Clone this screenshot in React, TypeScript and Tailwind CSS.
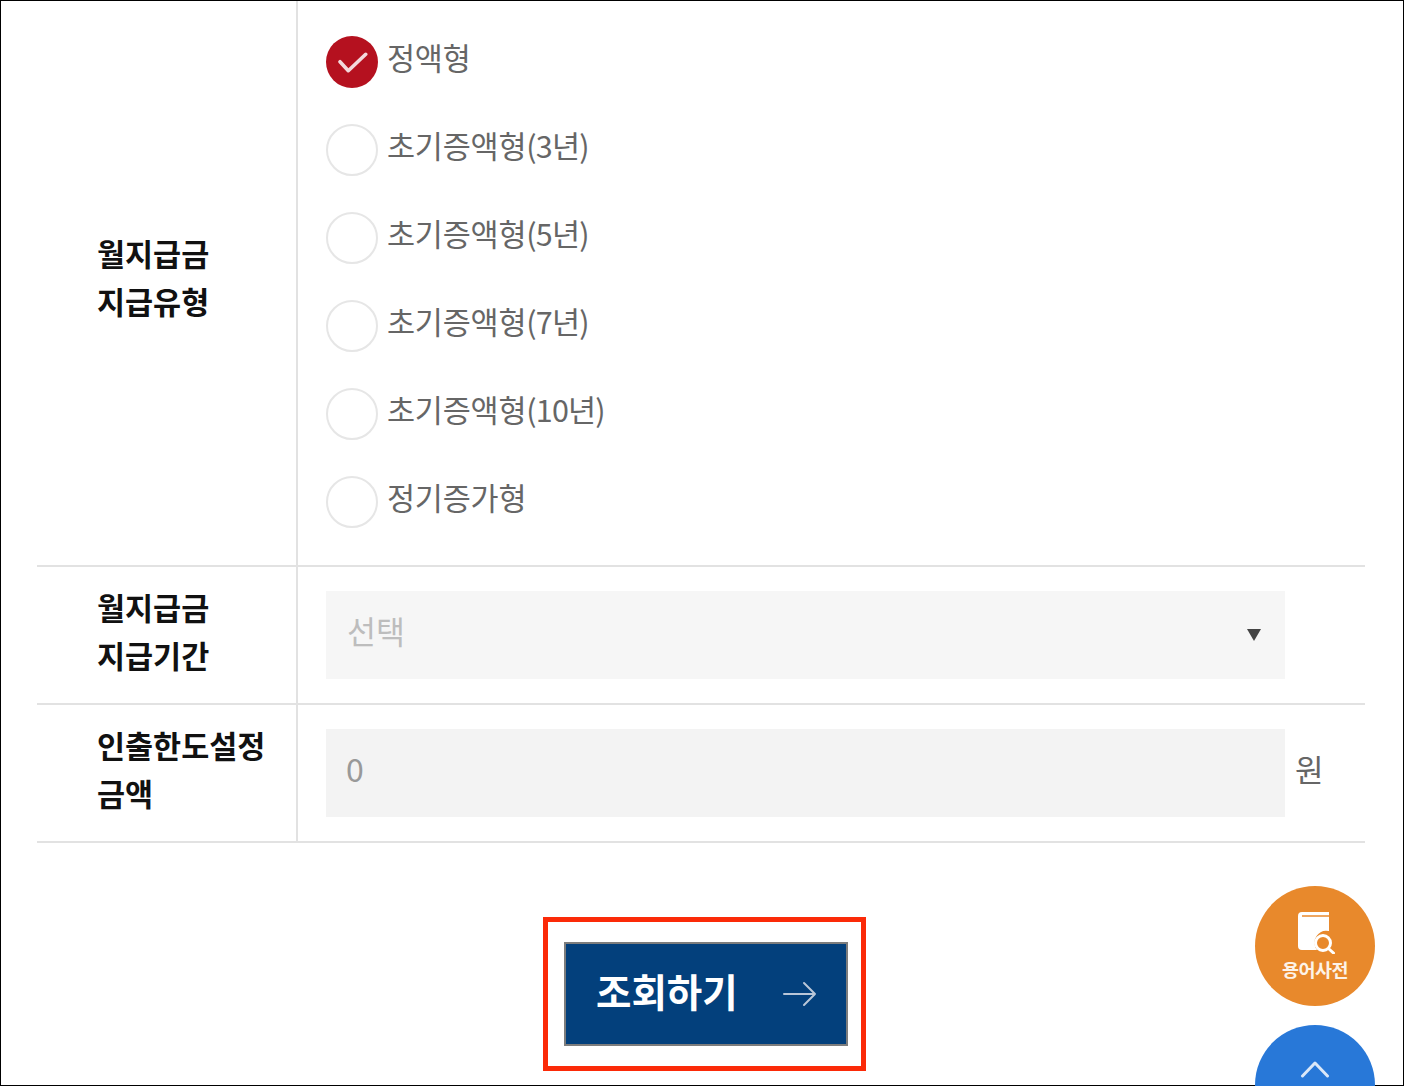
const FONT = "font-['Noto_Sans_CJK_KR','Noto_Sans',sans-serif]";

const options = [
  ["정액형", ""],
  ["초기증액형", "(3년)"],
  ["초기증액형", "(5년)"],
  ["초기증액형", "(7년)"],
  ["초기증액형", "(10년)"],
  ["정기증가형", ""],
];

function Radio({ label, suffix, checked }: { label: string; suffix: string; checked?: boolean }) {
  return (
    <div className="flex h-[88px] items-center">
      {checked ? (
        <span className="flex h-[52px] w-[52px] items-center justify-center rounded-full bg-[#b5111f]">
          <svg width="32" height="24" viewBox="0 0 32 24" fill="none" stroke="#f3d9dc" strokeWidth="3.6" strokeLinecap="round" strokeLinejoin="round">
            <path d="M4 11.7l8.3 9L29.7 4.3" />
          </svg>
        </span>
      ) : (
        <span className="h-[52px] w-[52px] rounded-full border-2 border-[#e6e6e6] bg-white" />
      )}
      <span className="relative top-[-5px] ml-[9px] text-[30.5px] leading-[40px] tracking-[-0.2px] text-[#666666]">
        {label}
        <span className="tracking-[-0.8px]">{suffix}</span>
      </span>
    </div>
  );
}

function Th({ lines, pad }: { lines: string[]; pad: string }) {
  return (
    <div className={`flex w-[261px] shrink-0 flex-col justify-center border-r-2 border-[#e2e2e2] pl-[60px] text-[30.5px] font-bold leading-[48px] text-[#111111] ${pad}`}>
      {lines.map((l) => (
        <div key={l}>{l}</div>
      ))}
    </div>
  );
}

export default function App() {
  return (
    <div className={`${FONT} relative h-[1086px] w-[1404px] overflow-hidden bg-white`}>
      <div className="h-[1086px] w-[1404px] overflow-hidden border border-black">
        <div className="mx-[36px] w-[1328px]">
          <div className="flex h-[566px] border-b-2 border-[#e2e2e2]">
            <Th lines={["월지급금", "지급유형"]} pad="pb-[13px]" />
            <div className="pl-[28px] pt-[17px]">
              {options.map(([label, suffix], i) => (
                <Radio key={label + suffix} label={label} suffix={suffix} checked={i === 0} />
              ))}
            </div>
          </div>
          <div className="flex h-[138px] border-b-2 border-[#e2e2e2]">
            <Th lines={["월지급금", "지급기간"]} pad="pb-[9px]" />
            <div className="flex items-center pl-[28px]">
              <div className="flex h-[88px] w-[959px] items-center justify-between bg-[#f6f6f6] pl-[21px] pr-[24px]">
                <span className="relative top-[-4px] text-[31.5px] text-[#bdbdbd]">선택</span>
                <svg width="14" height="12" viewBox="0 0 14 12" className="fill-[#444444]">
                  <path d="M0 0h14L7 12z" />
                </svg>
              </div>
            </div>
          </div>
          <div className="flex h-[138px] border-b-2 border-[#e2e2e2]">
            <Th lines={["인출한도설정", "금액"]} pad="pb-[8px]" />
            <div className="flex items-center pl-[28px]">
              <div className="flex h-[88px] w-[959px] items-center bg-[#f3f3f3] pl-[20px] text-[32px] text-[#999999]">
                <span className="relative top-[-5px]">0</span>
              </div>
              <span className="relative top-[-4px] ml-[10px] text-[31px] text-[#666666]">원</span>
            </div>
          </div>
          <div className="flex pl-[506px] pt-[74px]">
            <div className="border-[5px] border-[#fb2a08] pb-[20px] pl-[16px] pr-[13px] pt-[20px]">
              <button className="flex h-[104px] w-[284px] items-center border-2 border-[#7d7d7d] bg-[#03407c] pl-[30px] text-[38.5px] font-bold text-white">
                <span className="relative top-[-4px] leading-none">조회하기</span>
                <svg width="36" height="26" viewBox="0 0 36 26" fill="none" stroke="#b9c6d8" strokeWidth="2" strokeLinecap="round" strokeLinejoin="round" className="ml-[43px]">
                  <path d="M3 13h31M23 2l11 11-11 11" />
                </svg>
              </button>
            </div>
          </div>
        </div>
      </div>
      <div className="absolute left-[1255px] top-[886px] flex h-[120px] w-[120px] flex-col items-center rounded-full bg-[#e8892c] pt-[26px]">
        <svg width="38" height="42" viewBox="0 0 38 42" className="ml-[3px]">
          <path d="M4 0h27v19a12 12 0 0 0-12 19H4a4 4 0 0 1-4-4V4a4 4 0 0 1 4-4z" fill="#fff" />
          <path d="M4 4h27" stroke="#e8892c" strokeWidth="1.5" />
          <circle cx="25" cy="31" r="7.5" fill="none" stroke="#fff" strokeWidth="3" />
          <path d="M31 37l4.5 4" stroke="#fff" strokeWidth="3" strokeLinecap="round" />
        </svg>
        <span className="mt-[3px] text-[18.5px] font-bold leading-[24px] tracking-[-0.5px] text-[#fdf3e8]">용어사전</span>
      </div>
      <div className="absolute left-[1255px] top-[1025px] flex h-[120px] w-[120px] justify-center rounded-full bg-[#2878d8] pt-[35px]">
        <svg width="30" height="18" viewBox="0 0 30 18" fill="none" stroke="#dbe8f8" strokeWidth="3" strokeLinecap="round" strokeLinejoin="round">
          <path d="M2.5 16L15 3l12.5 13" />
        </svg>
      </div>
    </div>
  );
}
